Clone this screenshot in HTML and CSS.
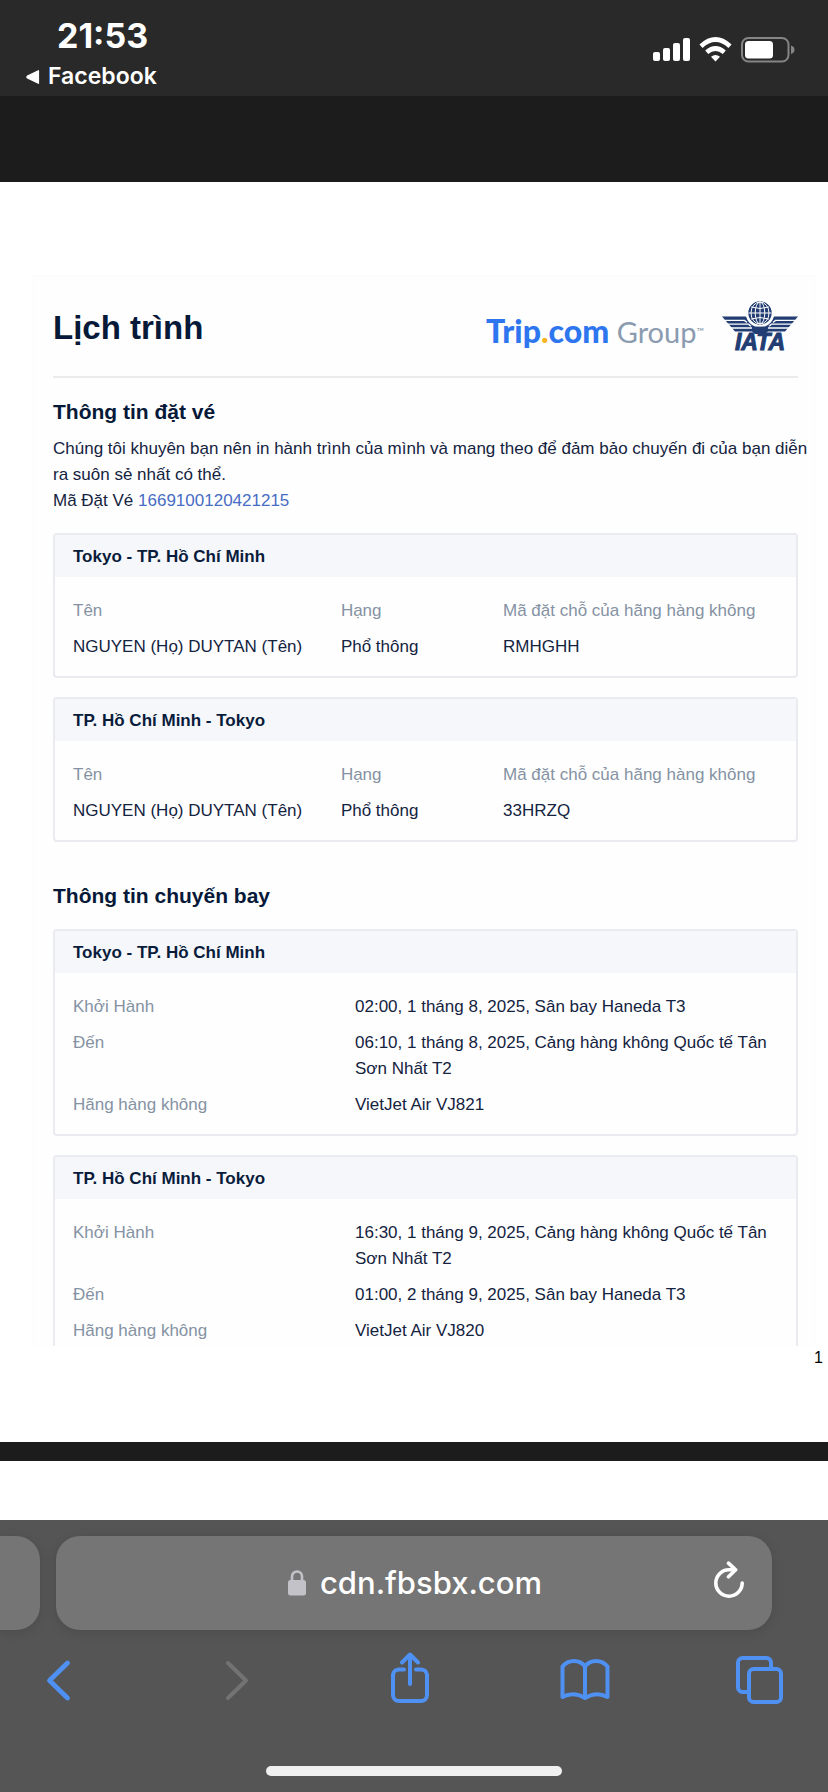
FILE: index.html
```html
<!DOCTYPE html>
<html lang="vi">
<head>
<meta charset="utf-8">
<meta name="viewport" content="width=device-width, initial-scale=1">
<title>Lịch trình</title>
<link rel="stylesheet" href="styles.css">
</head>
<body>
<header class="status">
  <div class="status-left">
    <span class="clock">21:53</span>
    <a class="back-app" href="#">
      <svg width="14" height="14" viewBox="0 0 14 14" aria-hidden="true"><path d="M12.4.8v12.4L1.4 7.8q-1-.8 0-1.6z" fill="#fff" stroke="#fff" stroke-width="1.4" stroke-linejoin="round"/></svg>
      Facebook
    </a>
  </div>
  <svg class="status-icons" width="142" height="26" viewBox="653 37 142 26" aria-hidden="true">
    <g fill="#fff">
      <rect x="653" y="52" width="7" height="9" rx="2"/>
      <rect x="663" y="48" width="7" height="13" rx="2"/>
      <rect x="673" y="43" width="7" height="18" rx="2"/>
      <rect x="683" y="38" width="7" height="23" rx="2"/>
      <path d="M715.500 61.500l-4.500-4.800q4.500-3.600 9 0z"/>
    </g>
    <g fill="none" stroke="#fff" stroke-width="4.600">
      <path d="M701 46.200q14.500-13.400 29 0"/>
      <path d="M706.700 52.300q8.800-7.600 17.600 0"/>
    </g>
    <rect x="742" y="38" width="46.500" height="23.500" rx="6.500" fill="none" stroke="#858585" stroke-width="2"/>
    <rect x="745" y="41" width="28" height="17.500" rx="3.500" fill="#fff"/>
    <path d="M791 45.500q3.500 1 3.500 4.200t-3.500 4.200z" fill="#858585"/>
  </svg>
</header>

<main class="viewer">
  <article class="page">
    <div class="sheet">
      <div class="masthead">
        <h1>Lịch trình</h1>
        <div class="logos">
          <div class="trip"><span class="trip-name">Trip<span class="dot">.</span>com</span> <span class="trip-group">Group</span><span class="tm">™</span></div>
          <svg class="iata" width="76" height="58" viewBox="0 -3 76 58" role="img" aria-label="IATA">
            <g fill="#213d73">
              <path d="M0 16.500h24q2 7 9 10h10q7-3 9-10h24L63 31.500H46L43 34H33l-3-2.500H13z"/>
              <text class="iata-text" x="38" y="50" text-anchor="middle">IATA</text>
            </g>
            <path d="M3 20.400h19.500l2.500 2M6 24.200h20.500l2.500 2M9 28h21M73 20.400H53.500l-2.500 2M70 24.200H49.500l-2.500 2M67 28H46" fill="none" stroke="#fff" stroke-width="1.300"/>
            <circle cx="38" cy="13" r="12.500" fill="#213d73" stroke="#fff" stroke-width="1.600"/>
            <g fill="none" stroke="#fff" stroke-width="1">
              <path d="M38 2v22M26.500 13h23M29 7q9 3 18 0M29 19q9-3 18 0"/>
              <ellipse cx="38" cy="13" rx="4.800" ry="11"/>
              <ellipse cx="38" cy="13" rx="9" ry="11"/>
            </g>
          </svg>
        </div>
      </div>

      <h2>Thông tin đặt vé</h2>
      <p class="intro">Chúng tôi khuyên bạn nên in hành trình của mình và mang theo để đảm bảo chuyến đi của bạn diễn ra suôn sẻ nhất có thể.</p>
      <p class="intro">Mã Đặt Vé <a class="ref" href="#">1669100120421215</a></p>

      <section class="card">
        <h3>Tokyo - TP. Hồ Chí Minh</h3>
        <div class="card-body">
          <table class="pax">
            <thead><tr><th class="c-name">Tên</th><th class="c-class">Hạng</th><th>Mã đặt chỗ của hãng hàng không</th></tr></thead>
            <tbody><tr><td>NGUYEN (Họ) DUYTAN (Tên)</td><td>Phổ thông</td><td>RMHGHH</td></tr></tbody>
          </table>
        </div>
      </section>
      <section class="card">
        <h3>TP. Hồ Chí Minh - Tokyo</h3>
        <div class="card-body">
          <table class="pax">
            <thead><tr><th class="c-name">Tên</th><th class="c-class">Hạng</th><th>Mã đặt chỗ của hãng hàng không</th></tr></thead>
            <tbody><tr><td>NGUYEN (Họ) DUYTAN (Tên)</td><td>Phổ thông</td><td>33HRZQ</td></tr></tbody>
          </table>
        </div>
      </section>

      <h2 class="flights">Thông tin chuyến bay</h2>
      <section class="card">
        <h3>Tokyo - TP. Hồ Chí Minh</h3>
        <dl class="card-body flight">
          <dt>Khởi Hành</dt><dd>02:00, 1 tháng 8, 2025, Sân bay Haneda T3</dd>
          <dt>Đến</dt><dd>06:10, 1 tháng 8, 2025, Cảng hàng không Quốc tế Tân Sơn Nhất T2</dd>
          <dt>Hãng hàng không</dt><dd>VietJet Air VJ821</dd>
        </dl>
      </section>
      <section class="card card-split">
        <h3>TP. Hồ Chí Minh - Tokyo</h3>
        <dl class="card-body flight">
          <dt>Khởi Hành</dt><dd>16:30, 1 tháng 9, 2025, Cảng hàng không Quốc tế Tân Sơn Nhất T2</dd>
          <dt>Đến</dt><dd>01:00, 2 tháng 9, 2025, Sân bay Haneda T3</dd>
          <dt>Hãng hàng không</dt><dd>VietJet Air VJ820</dd>
        </dl>
      </section>
    </div>
    <div class="page-no">1</div>
  </article>
  <div class="page page-next"></div>
</main>

<footer class="browser">
  <div class="tabs">
    <div class="tab tab-prev"></div>
    <div class="tab tab-current">
      <button class="address" type="button">
        <svg width="18" height="26" viewBox="0 0 18 26" aria-hidden="true"><path d="M4 12V6.500a5 5 0 0 1 10 0V12" fill="none" stroke="#c3c2c8" stroke-width="2.600"/><rect y="10" width="18" height="15.500" rx="2.500" fill="#c3c2c8"/></svg>
        cdn.fbsbx.com
      </button>
      <button class="reload" type="button" aria-label="Tải lại">
        <svg width="32" height="38" viewBox="0 0 32 38" fill="none" stroke="#fff" stroke-width="3.600" stroke-linecap="round" stroke-linejoin="round" aria-hidden="true"><path d="M29.200 22A13.200 13.200 0 1 1 16 8.800h5.500"/><path d="M15.500 2.200l7.200 6.600-7.200 7"/></svg>
      </button>
    </div>
  </div>
  <nav class="toolbar">
    <button type="button" aria-label="Quay lại"><svg width="50" height="54" viewBox="0 0 50 54"><path d="M34.500 12L16.500 29.500l18 17.500" stroke-width="4.800"/></svg></button>
    <button type="button" aria-label="Tiếp" class="off" disabled><svg width="50" height="54" viewBox="0 0 50 54"><path d="M19 12l18 17.500L19 47"/></svg></button>
    <button type="button" aria-label="Chia sẻ"><svg width="50" height="54" viewBox="0 0 50 54"><path d="M20 18.500h-5a6 6 0 0 0-6 5V44a6 6 0 0 0 6 6h22a6 6 0 0 0 6-6V23.500a6 6 0 0 0-6-5h-5M26 33V4M18 11.500L26 3.500l8 8"/></svg></button>
    <button type="button" aria-label="Dấu trang"><svg width="50" height="54" viewBox="0 0 50 54"><path d="M25 15.500q-4-5.500-11-5.500T2.500 15.500V46q11-6 22.500 1 11.500-7 22.500-1V15.500Q43 10 36 10t-11 5.500V46"/></svg></button>
    <button type="button" aria-label="Các tab"><svg width="50" height="54" viewBox="0 0 50 54"><path d="M13 41H7.500A4.500 4.500 0 0 1 3 36.500v-25A4.500 4.500 0 0 1 7.500 7h24a4.500 4.500 0 0 1 4.500 4.500V18"/><rect x="14" y="18" width="32" height="33" rx="4.500"/></svg></button>
  </nav>
  <div class="home"></div>
</footer>
</body>
</html>
```
FILE: styles.css
```css
* { box-sizing: border-box; }
body {
  margin: 0;
  min-height: 100vh;
  display: flex;
  flex-direction: column;
  background: #1c1c1c;
  font-family: "Liberation Sans", Arial, sans-serif;
  color: #0f294d;
}
h1, h2, h3, p, dl, dd { margin: 0; }
button { padding: 0; border: 0; background: none; font: inherit; color: inherit; }

.status {
  display: flex;
  justify-content: space-between;
  padding: 15px 33px 2px 26px;
  background: #292929;
  color: #fff;
  font-family: Inter, sans-serif;
}
.status-left { display: flex; flex-direction: column; }
.clock { padding-left: 31px; font-size: 34px; line-height: 42px; font-weight: 700; }
.back-app {
  display: flex;
  align-items: center;
  gap: 8px;
  padding-top: 2px;
  font-size: 23px;
  line-height: 35px;
  font-weight: 600;
  color: #fff;
  text-decoration: none;
}
.status-icons { margin-top: 22px; }

.viewer { flex: 1; display: flex; flex-direction: column; padding-top: 86px; gap: 19px; }
.page { background: #fff; padding: 93px 13px 72px 33px; }
.page-next { flex: 1; padding: 0; min-height: 56px; }
.sheet { background: #fefefe; border: 1px solid #fbfbfb; border-bottom: 0; padding: 0 16px 0 19px; color: #14233f; font-size: 17px; line-height: 26px; }

.masthead {
  display: flex;
  justify-content: space-between;
  align-items: center;
  padding: 21px 0;
  border-bottom: 2px solid #ebebee;
}
h1 { padding-top: 4px; font-size: 33px; line-height: 48px; color: #061938; }
.logos { display: flex; align-items: center; gap: 18px; }
.trip { font-family: Lato, sans-serif; font-size: 29px; line-height: 36px; padding-top: 10px; white-space: nowrap; color: #8b9bb0; }
.trip-name { font-size: 32px; font-weight: 900; color: #2e76f0; }
.dot { color: #f8b51e; }
.tm { font-size: 10px; vertical-align: 8px; }
.iata { overflow: visible; }
.iata-text { font: italic 700 23px "Liberation Sans", Arial, sans-serif; stroke: #213d73; stroke-width: 1px; }

h2 { margin: 20px 0 10px; font-size: 21px; line-height: 28px; color: #061938; }
.flights { margin: 40px 0 19px; }
.intro { margin-right: -14px; }
.ref { color: #476cc4; text-decoration: none; }

.card { margin-top: 19px; border: 2px solid #e9ebf0; border-radius: 4px; }
.flights + .card { margin-top: 0; }
.card-split { border-bottom: 0; border-radius: 4px 4px 0 0; }
h3 { padding: 9px 18px 7px; font-size: 17px; line-height: 26px; background: #f6f7fb; color: #0a1c3b; }
.card-body { padding: 21px 18px 16px; }
.card-split .card-body { padding-bottom: 2px; }
.pax { width: 100%; border-collapse: collapse; table-layout: fixed; }
th, td { padding: 0; text-align: left; font-weight: 400; }
th { padding-bottom: 10px; }
.c-name { width: 38%; }
.c-class { width: 23%; }
th, dt { color: #8592a3; }
.flight { display: grid; grid-template-columns: 2fr 3fr; row-gap: 10px; }
.page-no { margin-right: -8px; text-align: right; font-size: 16px; line-height: 24px; color: #000; }

.browser { background: #555; padding: 16px 0; color: #fff; }
.tabs { display: flex; gap: 16px; padding-right: 56px; }
.tab { background: #757575; border-radius: 24px; box-shadow: 0 2px 12px rgba(0, 0, 0, .12); }
.tab-prev { width: 40px; border-radius: 0 24px 24px 0; }
.tab-current { flex: 1; display: flex; align-items: center; padding: 0 27px 0 61px; height: 94px; }
.address {
  flex: 1;
  display: flex;
  align-items: center;
  justify-content: center;
  gap: 14px;
  font: 500 31px/40px Inter, sans-serif;
}
.reload { display: flex; padding-bottom: 6px; }
.toolbar { display: flex; justify-content: space-between; padding: 21px 43px 0 33px; }
.toolbar button { display: flex; }
.toolbar svg { fill: none; stroke: #4f90f3; stroke-width: 4px; stroke-linecap: round; stroke-linejoin: round; }
.toolbar .off svg { stroke: #737373; }
.home { width: 296px; height: 10px; margin: 61px auto 0; border-radius: 5px; background: #f0f0f0; }
```
